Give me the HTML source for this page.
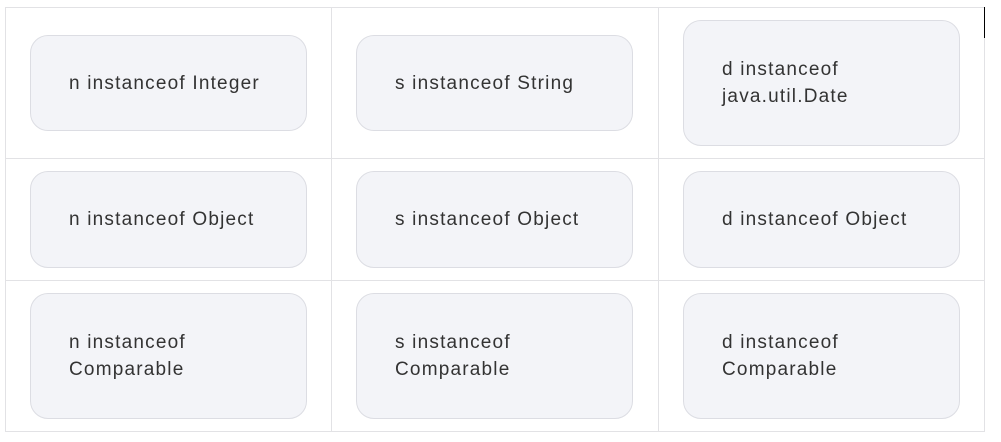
<!DOCTYPE html>
<html><head><meta charset="utf-8"><style>
html,body{margin:0;padding:0;background:#fff;width:1001px;height:442px;overflow:hidden;position:relative;font-family:"Liberation Sans",sans-serif;}
.h{position:absolute;height:1px;background:#e2e2e5;left:5px;width:980px}
.v{position:absolute;width:1px;background:#e2e2e5;top:7px;height:425px}
.b{position:absolute;box-sizing:border-box;background:#f3f4f8;border:1px solid #dcdde3;border-radius:18px;width:277px;display:flex;align-items:center;padding-left:38px;color:#333;font-size:19px;letter-spacing:1.2px;line-height:27px}
</style></head><body>
<div class="h" style="top:7px"></div>
<div class="h" style="top:158px"></div>
<div class="h" style="top:280px"></div>
<div class="h" style="top:431px"></div>
<div class="v" style="left:5px"></div>
<div class="v" style="left:331px"></div>
<div class="v" style="left:658px"></div>
<div class="v" style="left:984px"></div>
<div style="position:absolute;left:984px;top:7px;width:1px;height:31px;background:#000"></div>

<div class="b" style="left:30px;top:35px;height:96px">n instanceof Integer</div>
<div class="b" style="left:356px;top:35px;height:96px">s instanceof String</div>
<div class="b" style="left:683px;top:20px;height:126px">d instanceof<br>java.util.Date</div>

<div class="b" style="left:30px;top:171px;height:97px">n instanceof Object</div>
<div class="b" style="left:356px;top:171px;height:97px">s instanceof Object</div>
<div class="b" style="left:683px;top:171px;height:97px">d instanceof Object</div>

<div class="b" style="left:30px;top:293px;height:126px">n instanceof<br>Comparable</div>
<div class="b" style="left:356px;top:293px;height:126px">s instanceof<br>Comparable</div>
<div class="b" style="left:683px;top:293px;height:126px">d instanceof<br>Comparable</div>
</body></html>
